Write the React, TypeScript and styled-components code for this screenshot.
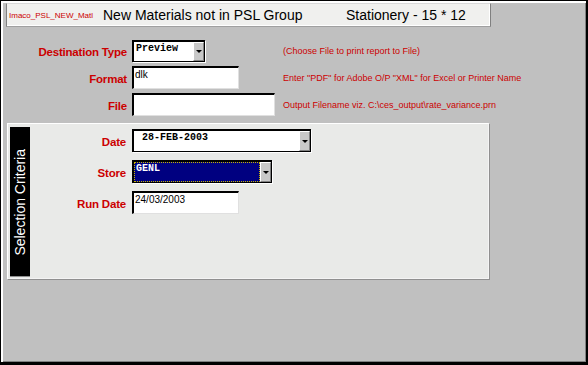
import React from "react";
import styled, { createGlobalStyle, css } from "styled-components";

const GlobalStyle = createGlobalStyle`
  html, body {
    margin: 0;
    padding: 0;
    background: #c0c0c0;
    overflow: hidden;
  }
  * {
    box-sizing: border-box;
  }
`;

const Window = styled.div`
  width: 588px;
  height: 365px;
  background: #c0c0c0;
  border-top: 1px solid #000;
  border-left: 1px solid #000;
  border-right: 2px solid #000;
  border-bottom: 3px solid #000;
  box-shadow: inset 2px 2px 0 #fff, inset -1px -1px 0 #808080;
  font-family: "Liberation Sans", Arial, sans-serif;
  display: flex;
  flex-direction: column;
`;

const TitleBar = styled.div`
  margin: 2px 0 0 5px;
  width: 485px;
  height: 24px;
  background: #f0f0ee;
  border-top: 1px solid #d8d8d8;
  border-left: 1px solid #808080;
  border-right: 1px solid #808080;
  border-bottom: 1px solid #a0a0a0;
  box-shadow: inset -1px -1px 0 #fff;
  display: flex;
  align-items: center;
`;

const ModuleName = styled.span`
  width: 96px;
  padding-left: 2px;
  font-size: 8px;
  color: #cc0000;
  white-space: nowrap;
`;

const Title = styled.span<{ $w?: number }>`
  width: ${({ $w }) => ($w ? `${$w}px` : "auto")};
  font-size: 14px;
  color: #000;
`;

const Form = styled.div<{ $cols: string; $rowGap: number }>`
  display: grid;
  grid-template-columns: ${({ $cols }) => $cols};
  column-gap: 5px;
  row-gap: ${({ $rowGap }) => $rowGap}px;
  align-items: center;
`;

const TopForm = styled(Form)`
  margin-top: 13px;
`;

const Label = styled.label`
  text-align: right;
  font-size: 11.5px;
  font-weight: bold;
  color: #cc0000;
  letter-spacing: -0.2px;
  padding-top: 2px;
`;

const Hint = styled.span`
  font-size: 9px;
  color: #cc0000;
  white-space: nowrap;
`;

const sunken = css`
  border-top: 2px solid #000;
  border-left: 2px solid #000;
  border-right: 1px solid #e0e0e0;
  border-bottom: 1px solid #e0e0e0;
  box-shadow: inset -1px -1px 0 #fff;
`;

const TextField = styled.div<{ $w: number; $h: number }>`
  ${sunken};
  width: ${({ $w }) => $w}px;
  height: ${({ $h }) => $h}px;
  background: #fff;
  font-size: 10px;
  padding: 1px 0 0 1px;
  color: #000;
`;

const SelectBox = styled.div<{ $w: number; $h: number }>`
  width: ${({ $w }) => $w}px;
  height: ${({ $h }) => $h}px;
  border: 1px solid #000;
  border-top-width: 2px;
  border-left-width: 2px;
  background: #fff;
  display: flex;
  align-items: stretch;
  box-shadow: 1px 1px 0 #fff;
`;

const SelectValue = styled.div<{ $active?: boolean; $indent: number }>`
  flex: 1;
  font-family: "Liberation Mono", "Courier New", monospace;
  font-weight: bold;
  font-size: 10px;
  padding: 1px 0 0 ${({ $indent }) => $indent}px;
  ${({ $active }) =>
    $active
      ? css`
          background: #000080;
          color: #fff;
          outline: 1px dotted #c8b400;
          outline-offset: -1px;
        `
      : css`
          background: #fff;
          color: #000;
        `}
`;

const DropButton = styled.div`
  width: 11px;
  background: #c8c8c8;
  border-left: 1px solid #fff;
  border-top: 1px solid #fff;
  border-right: 1px solid #808080;
  border-bottom: 1px solid #808080;
  display: flex;
  align-items: center;
  justify-content: center;

  &::after {
    content: "";
    width: 0;
    height: 0;
    border-left: 3px solid transparent;
    border-right: 3px solid transparent;
    border-top: 3px solid #000;
  }
`;

const Panel = styled.div`
  margin: 7px 0 0 6px;
  width: 482px;
  height: 156px;
  background: #e9eae8;
  border-top: 1px solid #fff;
  border-left: 1px solid #fff;
  border-right: 1px solid #f4f4f4;
  border-bottom: 1px solid #f4f4f4;
  box-shadow: 1px 1px 0 #909090;
  padding: 3px 0 1px 2px;
  display: flex;
  align-items: flex-start;
`;

const SideBar = styled.div`
  width: 20px;
  height: 150px;
  background: #000;
  border-bottom: 1px solid #909090;
  display: flex;
  align-items: center;
  justify-content: center;
  padding-top: 2px;
`;

const SideTitle = styled.span`
  writing-mode: vertical-rl;
  transform: rotate(180deg);
  color: #fff;
  font-size: 14px;
  white-space: nowrap;
`;

const PanelForm = styled(Form)`
  padding-top: 2px;
  column-gap: 6px;
  justify-items: start;
  & > label {
    justify-self: end;
  }
`;

type SelectProps = {
  value: string;
  w: number;
  h: number;
  indent: number;
  active?: boolean;
};

const Select = ({ value, w, h, indent, active }: SelectProps) => (
  <SelectBox $w={w} $h={h}>
    <SelectValue $active={active} $indent={indent}>
      {value}
    </SelectValue>
    <DropButton />
  </SelectBox>
);

const App = () => {
  return (
    <>
      <GlobalStyle />
      <Window>
        <TitleBar>
          <ModuleName>Imaco_PSL_NEW_Matl</ModuleName>
          <Title $w={243}>New Materials not in PSL Group</Title>
          <Title>Stationery - 15 * 12</Title>
        </TitleBar>

        <TopForm $cols="126px 146px 1fr" $rowGap={4}>
          <Label>Destination Type</Label>
          <Select value="Preview" w={73} h={22} indent={2} />
          <Hint>(Choose File to print report to File)</Hint>

          <Label>Format</Label>
          <TextField $w={107} $h={23}>dlk</TextField>
          <Hint>Enter "PDF" for Adobe O/P "XML" for Excel or Printer Name</Hint>

          <Label>File</Label>
          <TextField $w={143} $h={23} />
          <Hint>Output Filename viz. C:\ces_output\rate_variance.prn</Hint>
        </TopForm>

        <Panel>
          <SideBar>
            <SideTitle>Selection Criteria</SideTitle>
          </SideBar>
          <PanelForm $cols="96px auto" $rowGap={8}>
            <Label>Date</Label>
            <Select value="28-FEB-2003" w={179} h={23} indent={8} />

            <Label>Store</Label>
            <Select value="GENL" w={140} h={23} indent={2} active />

            <Label>Run Date</Label>
            <TextField $w={107} $h={23}>24/03/2003</TextField>
          </PanelForm>
        </Panel>
      </Window>
    </>
  );
};

export default App;
